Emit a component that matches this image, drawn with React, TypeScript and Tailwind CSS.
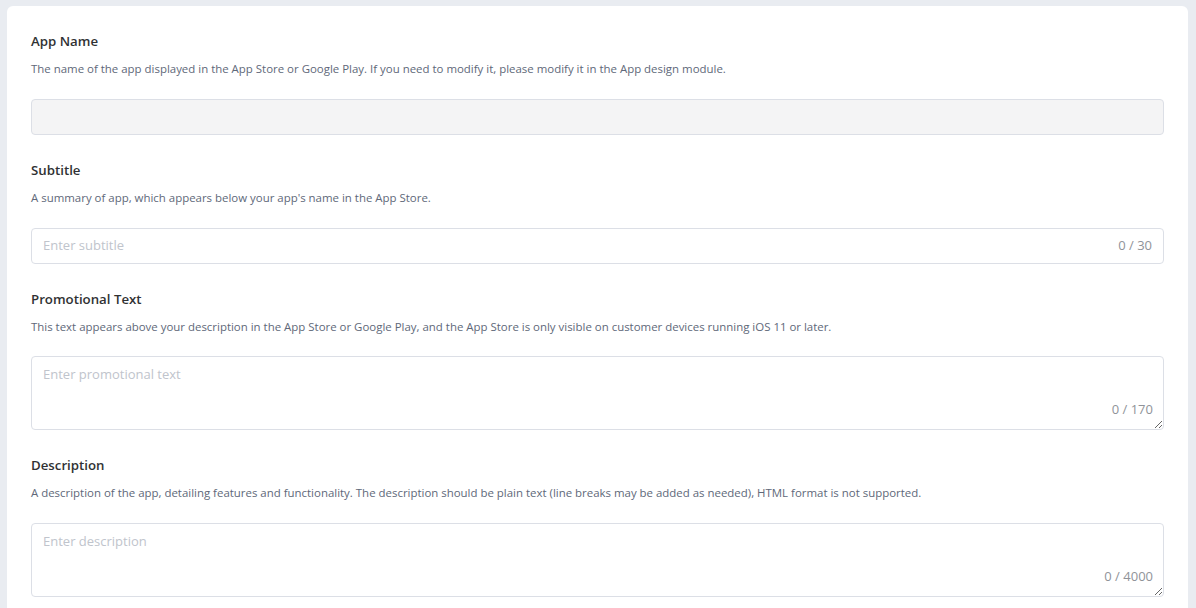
import React from "react";

const font = { fontFamily: '"Open Sans", "Noto Sans", sans-serif' };

function Section({
  title,
  desc,
  gap = "mt-[21px]",
  children,
}: {
  title: string;
  desc: string;
  gap?: string;
  children: React.ReactNode;
}) {
  return (
    <div className="flex flex-col">
      <div className="text-[13.25px] leading-[20px] font-semibold text-[#303133]">{title}</div>
      <div className="mt-[9px] text-[11.45px] leading-[18px] text-[#606879]">{desc}</div>
      <div className={gap}>{children}</div>
    </div>
  );
}

export default function App() {
  return (
    <div className="min-h-[608px] h-[608px] overflow-hidden bg-[#e9ecf1] pl-[7px] pr-[8px] pt-[6px]" style={font}>
      <div className="bg-white rounded-[6px] px-[24px] pt-[25px] pb-[40px] flex flex-col gap-[25px]">
        <Section
          title="App Name"
          desc="The name of the app displayed in the App Store or Google Play. If you need to modify it, please modify it in the App design module."
        >
          <div className="h-[36px] rounded-[4px] border border-[#dcdfe6] bg-[#f4f4f5]" />
        </Section>
        <Section
          title="Subtitle"
          desc="A summary of app, which appears below your app's name in the App Store."
        >
          <div className="h-[36px] rounded-[4px] border border-[#dcdfe6] bg-white flex items-center px-[11px]">
            <input
              className="flex-1 outline-none text-[13px] text-[#606266] placeholder:text-[#c0c4cc] bg-transparent"
              placeholder="Enter subtitle"
            />
            <span className="text-[13px] text-[#909399]">0 / 30</span>
          </div>
        </Section>
        <Section
          title="Promotional Text"
          desc="This text appears above your description in the App Store or Google Play, and the App Store is only visible on customer devices running iOS 11 or later."
          gap="mt-[20px]"
        >
          <div className="relative">
            <textarea
              className="block w-full h-[74px] rounded-[4px] border border-[#dcdfe6] bg-white px-[11px] py-[7px] text-[13px] leading-[20px] outline-none placeholder:text-[#c0c4cc]"
              placeholder="Enter promotional text"
            />
            <span className="absolute right-[11px] bottom-[13px] text-[13px] leading-[16px] text-[#909399]">0 / 170</span>
          </div>
        </Section>
        <Section
          title="Description"
          desc="A description of the app, detailing features and functionality. The description should be plain text (line breaks may be added as needed), HTML format is not supported."
        >
          <div className="relative">
            <textarea
              className="block w-full h-[74px] rounded-[4px] border border-[#dcdfe6] bg-white px-[11px] py-[7px] text-[13px] leading-[20px] outline-none placeholder:text-[#c0c4cc]"
              placeholder="Enter description"
            />
            <span className="absolute right-[11px] bottom-[13px] text-[13px] leading-[16px] text-[#909399]">0 / 4000</span>
          </div>
        </Section>
      </div>
    </div>
  );
}
